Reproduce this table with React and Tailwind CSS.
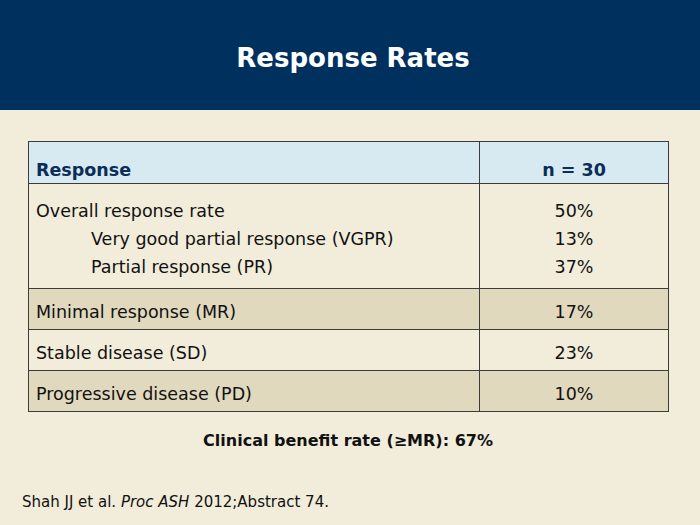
import React from 'react';

const rows = [
  { label: 'Minimal response (MR)', value: '17%', tan: true },
  { label: 'Stable disease (SD)', value: '23%', tan: false },
  { label: 'Progressive disease (PD)', value: '10%', tan: true },
];

const App = () => {
  return (
    <div className="w-[700px] h-[525px] bg-[#f2ecdb] flex flex-col" style={{ fontFamily: '"DejaVu Sans", Verdana, sans-serif' }}>
      {/* Title bar */}
      <div className="h-[110px] bg-[#00305e] flex items-center justify-center">
        <h1 className="text-[26px] font-bold text-white mt-[6px] pl-[6px]">Response Rates</h1>
      </div>

      {/* Table */}
      <div className="pl-[28px] pt-[31px]">
        <table className="w-[641px] border-collapse text-[17.5px] text-[#111]">
          <thead>
            <tr className="bg-[#d7eaf2] h-[42px]">
              <th className="border border-[#3c3c3c] text-left align-bottom px-[7px] pb-0 text-[#0b2d57] font-bold w-[451px]">Response</th>
              <th className="border border-[#3c3c3c] text-center align-bottom pb-0 text-[#0b2d57] font-bold">n = 30</th>
            </tr>
          </thead>
          <tbody>
            <tr className="h-[105px]">
              <td className="border border-[#3c3c3c] px-[7px] pt-[13px] pb-[7px] align-top leading-[28px]">
                <div>Overall response rate</div>
                <div className="pl-[55px]">Very good partial response (VGPR)</div>
                <div className="pl-[55px]">Partial response (PR)</div>
              </td>
              <td className="border border-[#3c3c3c] text-center pt-[13px] pb-[7px] align-top leading-[28px]">
                <div>50%</div>
                <div>13%</div>
                <div>37%</div>
              </td>
            </tr>
            {rows.map((r) => (
              <tr key={r.label} className={r.tan ? 'bg-[#e1d9bd] h-[41px]' : 'h-[41px]'}>
                <td className="border border-[#3c3c3c] px-[7px] pt-[6px] leading-[22px]">{r.label}</td>
                <td className="border border-[#3c3c3c] text-center pt-[6px] leading-[22px]">{r.value}</td>
              </tr>
            ))}
          </tbody>
        </table>
      </div>

      {/* Clinical benefit */}
      <p className="text-center text-[16px] font-bold text-[#111] mt-[17px] pr-[4px]">
        Clinical benefit rate (≥MR): 67%
      </p>

      {/* Citation */}
      <p className="text-[15px] text-[#111] mt-[38px] pl-[22px]">
        Shah JJ et al. <span className="italic">Proc ASH</span> 2012;Abstract 74.
      </p>
    </div>
  );
};

export default App;
